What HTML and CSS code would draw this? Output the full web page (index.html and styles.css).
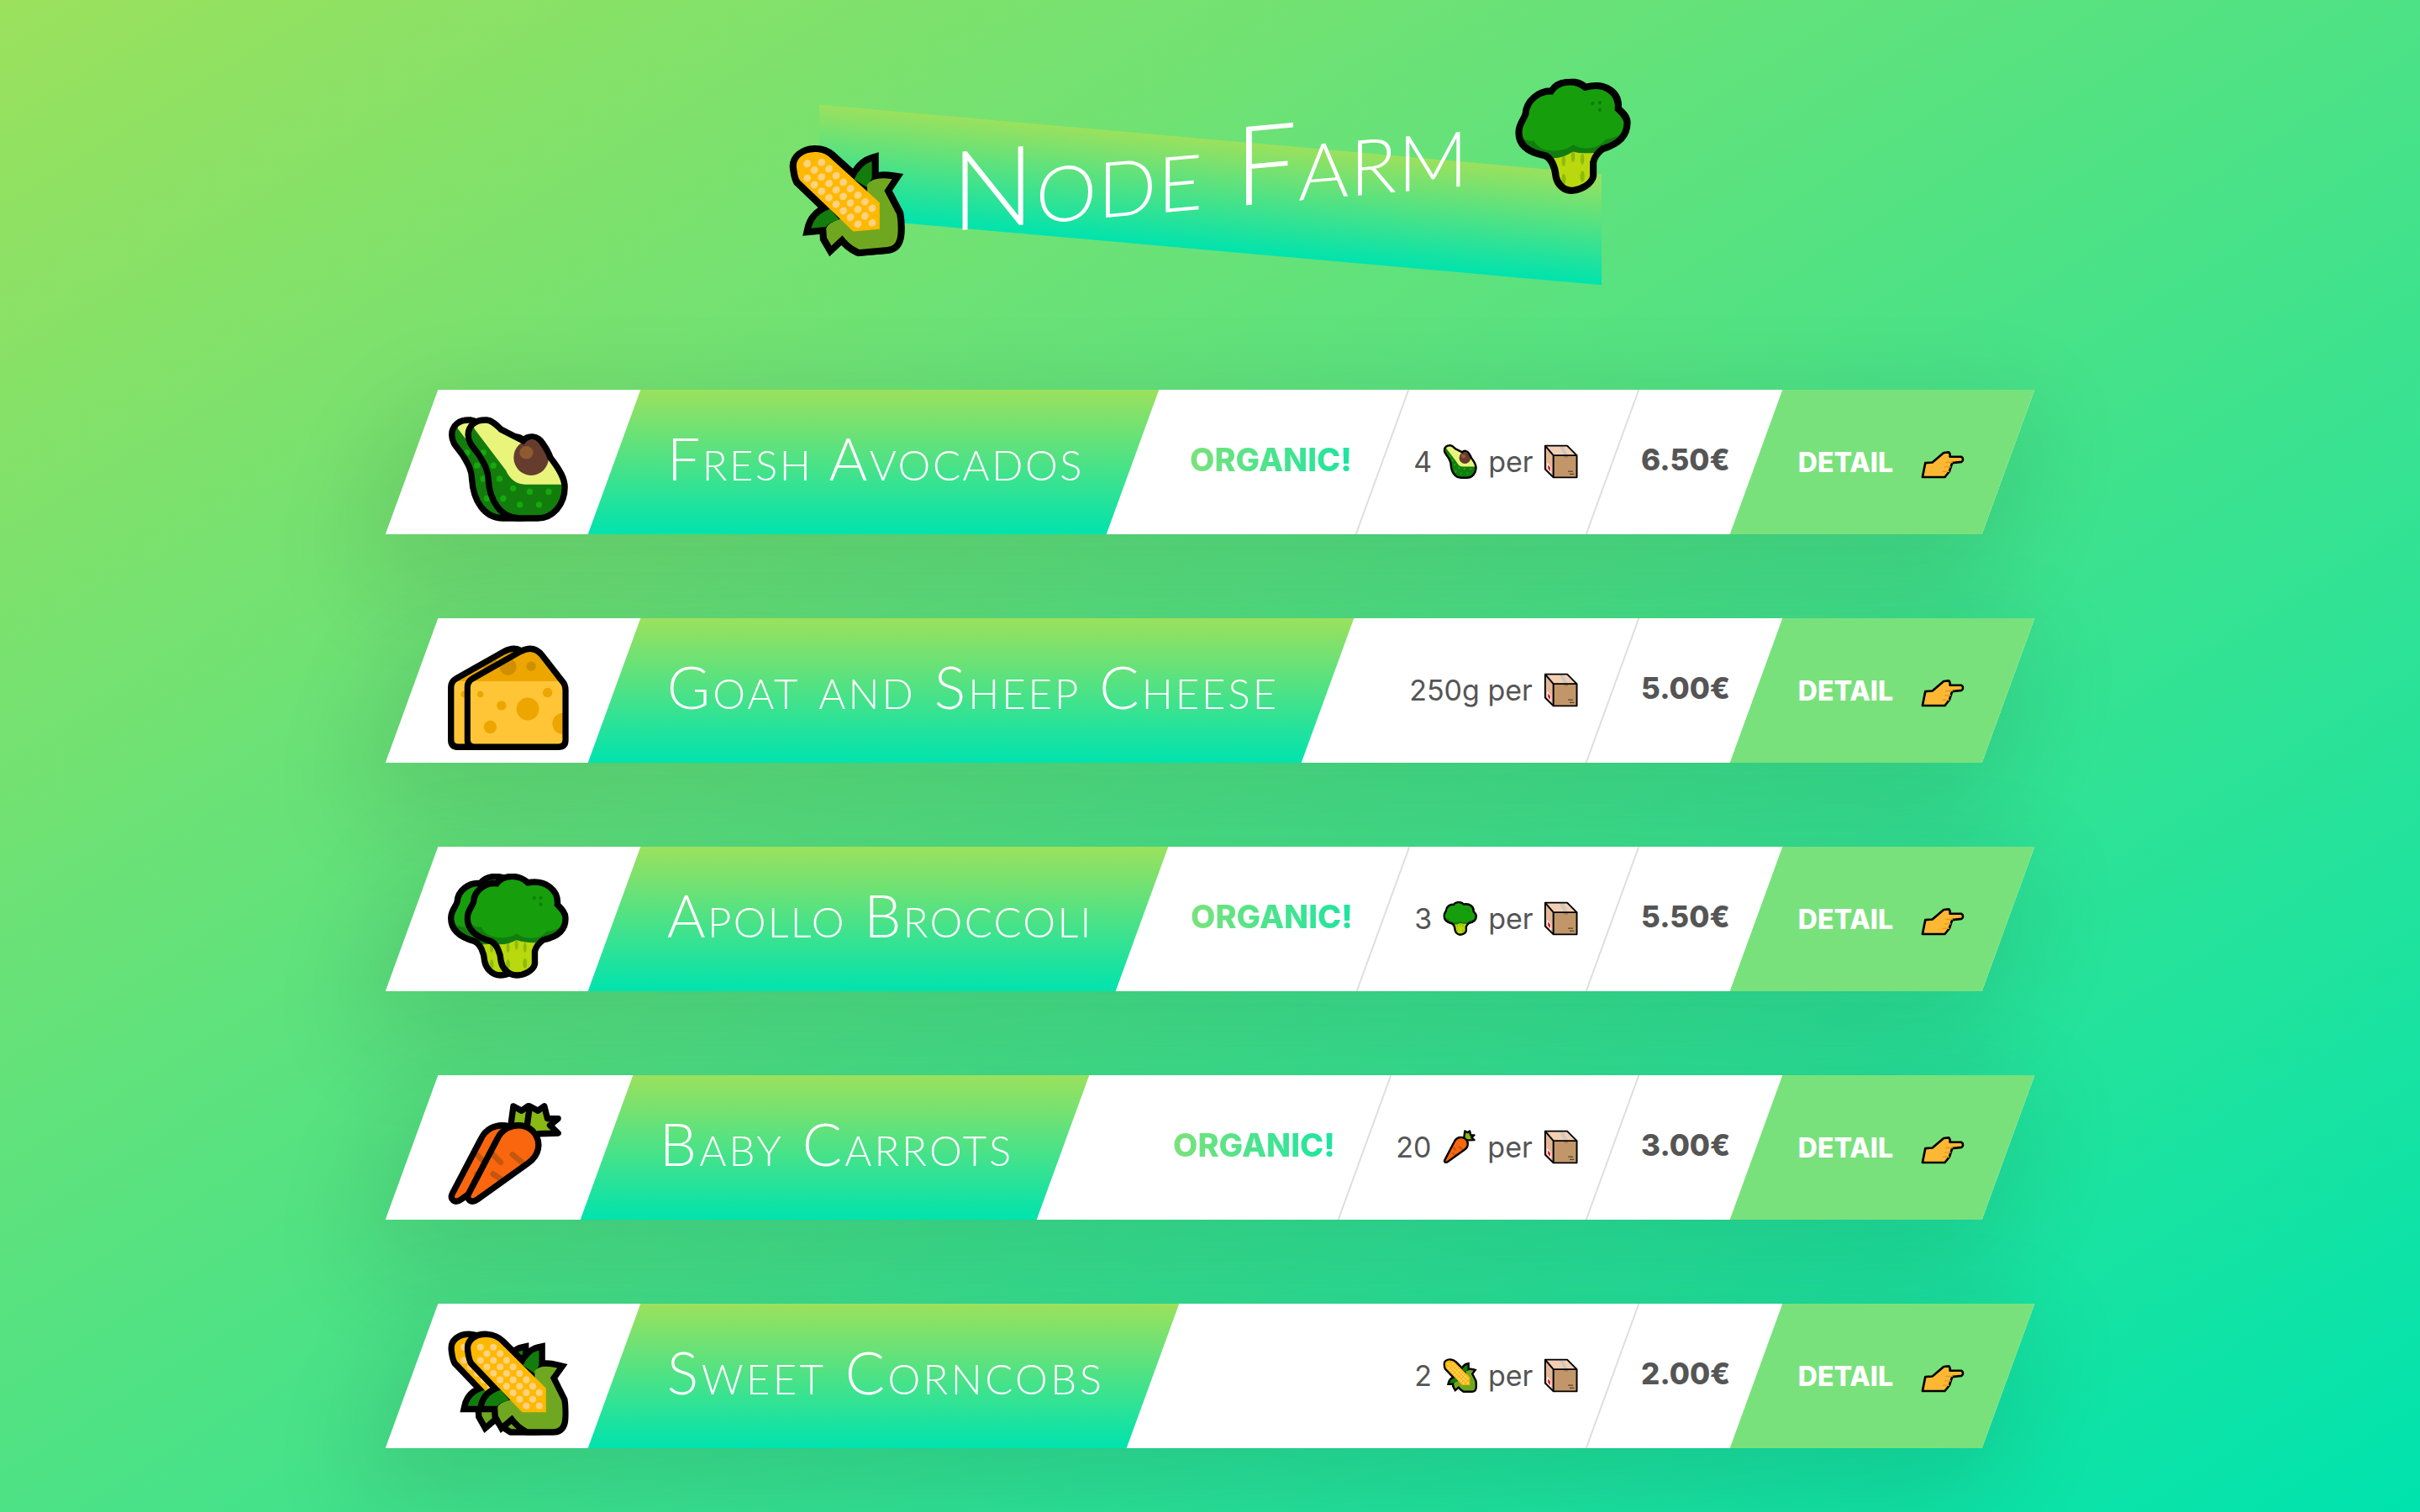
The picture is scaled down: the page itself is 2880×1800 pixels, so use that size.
FILE: index.html
```html
<!DOCTYPE html>
<html>
<head>
  <meta charset='utf-8'>
  <title>Node Farm</title>
  <link rel="stylesheet" href="styles.css">
</head>

<body>
  <svg class="sprite" aria-hidden="true">
    <defs>
      <clipPath id="cheese-clip"><path d="M11 150Q11 128 30 118L200 22Q245 -2 275 35L345 125Q359 140 359 160L359 335Q359 361 333 361L37 361Q11 361 11 335Z"/></clipPath>
      <clipPath id="avocado-clip"><path d="M14 65C14 30 40 10 80 12C100 14 115 30 130 45L208 85C225 65 260 65 278 95C292 115 300 130 305 145C340 190 356 220 356 250C356 310 315 360 260 360L195 360C130 360 90 300 85 220C85 190 70 165 55 140C35 110 14 95 14 65Z"/></clipPath>
      <clipPath id="broccoli-clip"><path d="M11 158C11 130 30 115 33 100C35 60 75 30 115 35C135 5 190 0 225 32C290 20 335 60 330 110C345 125 359 140 359 158C359 200 330 225 280 235C265 245 255 255 250 275L250 320C245 345 210 360 185 360C155 360 135 335 130 310C128 280 115 250 95 240C40 225 11 200 11 158Z"/></clipPath>
      <clipPath id="carrot-clip"><path d="M16 325L118 130C135 95 170 78 205 83C245 90 270 125 263 165C258 190 245 205 225 218L48 345C25 362 5 345 16 325Z"/></clipPath>
    </defs>

    <symbol id="cheese" viewBox="0 0 370 372">
      <path fill="#ffc536" d="M11 150Q11 128 30 118L200 22Q245 -2 275 35L345 125Q359 140 359 160L359 335Q359 361 333 361L37 361Q11 361 11 335Z"/>
      <g clip-path="url(#cheese-clip)">
        <path fill="#eda600" d="M0 128L370 128L370 0L0 0Z"/>
        <circle fill="#cf8f00" cx="155" cy="77" r="30"/>
        <circle fill="#cf8f00" cx="237" cy="75" r="17"/>
        <g fill="#eda600">
          <circle cx="225" cy="226" r="40"/>
          <circle cx="132" cy="214" r="17"/>
          <circle cx="92" cy="290" r="23"/>
          <circle cx="57" cy="174" r="11"/>
          <circle cx="295" cy="168" r="17"/>
          <circle cx="350" cy="278" r="38"/>
        </g>
      </g>
      <path fill="none" stroke="#000" stroke-width="22" d="M11 150Q11 128 30 118L200 22Q245 -2 275 35L345 125Q359 140 359 160L359 335Q359 361 333 361L37 361Q11 361 11 335Z"/>
    </symbol>

    <symbol id="avocado" viewBox="0 0 370 372">
      <path fill="#127d0c" d="M14 65C14 30 40 10 80 12C100 14 115 30 130 45L208 85C225 65 260 65 278 95C292 115 300 130 305 145C340 190 356 220 356 250C356 310 315 360 260 360L195 360C130 360 90 300 85 220C85 190 70 165 55 140C35 110 14 95 14 65Z"/>
      <g clip-path="url(#avocado-clip)">
        <path fill="#e8f57a" d="M20 0L37 45L147 190Q170 240 215 240L370 240L370 0Z"/>
        <g fill="#16a80e">
          <circle cx="68" cy="127" r="11"/>
          <circle cx="103" cy="173" r="11"/>
          <circle cx="125" cy="220" r="11"/>
          <circle cx="173" cy="254" r="11"/>
          <circle cx="232" cy="266" r="11"/>
          <circle cx="299" cy="266" r="11"/>
          <circle cx="138" cy="290" r="11"/>
          <circle cx="197" cy="312" r="11"/>
          <circle cx="265" cy="312" r="11"/>
        </g>
      </g>
      <ellipse fill="#653c2e" cx="237" cy="145" rx="62" ry="63"/>
      <ellipse fill="#8d5b2f" cx="220" cy="127" rx="24" ry="23"/>
      <path fill="none" stroke="#000" stroke-width="22" d="M14 65C14 30 40 10 80 12C100 14 115 30 130 45L208 85C225 65 260 65 278 95C292 115 300 130 305 145C340 190 356 220 356 250C356 310 315 360 260 360L195 360C130 360 90 300 85 220C85 190 70 165 55 140C35 110 14 95 14 65Z"/>
    </symbol>

    <symbol id="broccoli" viewBox="0 0 370 372">
      <path fill="#b9d80d" d="M11 158C11 130 30 115 33 100C35 60 75 30 115 35C135 5 190 0 225 32C290 20 335 60 330 110C345 125 359 140 359 158C359 200 330 225 280 235C265 245 255 255 250 275L250 320C245 345 210 360 185 360C155 360 135 335 130 310C128 280 115 250 95 240C40 225 11 200 11 158Z"/>
      <g clip-path="url(#broccoli-clip)">
        <g fill="#8cbb0c">
          <ellipse cx="155" cy="262" rx="6" ry="18"/>
          <ellipse cx="185" cy="252" rx="6" ry="18"/>
          <ellipse cx="215" cy="262" rx="6" ry="18"/>
          <ellipse cx="155" cy="322" rx="7" ry="18"/>
          <ellipse cx="215" cy="318" rx="7" ry="18"/>
        </g>
        <path fill="#117d0e" d="M0 0L370 0L370 170C350 215 300 235 260 245Q210 245 185 235Q150 255 115 250C70 230 20 220 0 160Z"/>
        <path fill="#179e0c" d="M0 0L370 0L370 165C345 200 300 205 290 205C270 235 215 235 185 213C160 235 80 235 60 190C30 190 15 170 0 150Z"/>
        <g fill="#117d0e">
          <circle cx="248" cy="86" r="6"/>
          <circle cx="271" cy="86" r="6"/>
          <circle cx="271" cy="109" r="6"/>
        </g>
      </g>
      <path fill="none" stroke="#000" stroke-width="22" d="M11 158C11 130 30 115 33 100C35 60 75 30 115 35C135 5 190 0 225 32C290 20 335 60 330 110C345 125 359 140 359 158C359 200 330 225 280 235C265 245 255 255 250 275L250 320C245 345 210 360 185 360C155 360 135 335 130 310C128 280 115 250 95 240C40 225 11 200 11 158Z"/>
    </symbol>

    <symbol id="carrot" viewBox="0 0 345 372">
      <path fill="#88b914" stroke="#000" stroke-width="22" stroke-linejoin="round" d="M220 110L233 14L262 30L285 14L296 58L334 58L305 82L334 110L265 112L250 125Z"/>
      <path fill="#f9660d" d="M16 325L118 130C135 95 170 78 205 83C245 90 270 125 263 165C258 190 245 205 225 218L48 345C25 362 5 345 16 325Z"/>
      <g clip-path="url(#carrot-clip)" fill="none" stroke="#c5560f" stroke-width="20" stroke-linecap="round">
        <path d="M172 186L205 213"/>
        <path d="M103 255L130 273"/>
        <path d="M105 188L130 213"/>
      </g>
      <path fill="none" stroke="#000" stroke-width="22" d="M16 325L118 130C135 95 170 78 205 83C245 90 270 125 263 165C258 190 245 205 225 218L48 345C25 362 5 345 16 325Z"/>
    </symbol>

    <symbol id="corn" viewBox="0 0 370 373">
      <g stroke="#000" stroke-width="44" stroke-linejoin="miter" stroke-miterlimit="3">
        <path d="M208 123Q230 78 265 70L265 123L250 153Z"/>
        <path d="M70 268Q80 225 130 211L160 248Q125 255 118 268Z"/>
        <path d="M250 143Q270 118 330 133L305 168L345 248C350 275 350 310 346 325Q340 350 315 350L225 350Q195 335 170 300L135 330L120 303L118 273Q125 255 160 248L250 200Z"/>
        <path stroke-linejoin="round" d="M23 70C18 40 45 22 80 24C105 26 118 34 130 46L290 205L290 290L205 290L33 110C27 100 25 85 23 70Z"/>
      </g>
      <path fill="#127d0c" d="M208 123Q230 78 265 70L265 123L250 153Z"/>
      <path fill="#127d0c" d="M70 268Q80 225 130 211L160 248Q125 255 118 268Z"/>
      <path fill="#6fa820" d="M250 143Q270 118 330 133L305 168L345 248C350 275 350 310 346 325Q340 350 315 350L225 350Q195 335 170 300L135 330L120 303L118 273Q125 255 160 248L250 200Z"/>
      <path fill="#ffb800" d="M23 70C18 40 45 22 80 24C105 26 118 34 130 46L290 205L290 290L205 290L33 110C27 100 25 85 23 70Z"/>
      <g fill="#ffd27f">
        <circle cx="57" cy="59" r="12"/><circle cx="103" cy="59" r="12"/><circle cx="80" cy="82" r="12"/><circle cx="127" cy="82" r="12"/>
        <circle cx="57" cy="106" r="12"/><circle cx="103" cy="106" r="12"/><circle cx="150" cy="106" r="12"/><circle cx="80" cy="129" r="12"/>
        <circle cx="127" cy="129" r="12"/><circle cx="173" cy="129" r="12"/><circle cx="103" cy="152" r="12"/><circle cx="150" cy="152" r="12"/>
        <circle cx="196" cy="152" r="12"/><circle cx="127" cy="175" r="12"/><circle cx="173" cy="175" r="12"/><circle cx="220" cy="175" r="12"/>
        <circle cx="150" cy="198" r="12"/><circle cx="196" cy="198" r="12"/><circle cx="243" cy="198" r="12"/><circle cx="173" cy="221" r="12"/>
        <circle cx="220" cy="221" r="12"/><circle cx="266" cy="221" r="12"/><circle cx="196" cy="244" r="12"/><circle cx="243" cy="244" r="12"/>
        <circle cx="220" cy="268" r="12"/><circle cx="266" cy="268" r="12"/>
      </g>
    </symbol>

    <symbol id="box" viewBox="0 0 125 125">
      <path fill="#c19769" d="M35 40L120 40L120 120L35 120Z"/>
      <path fill="#f3cfb3" d="M5 5L85 5L120 40L35 40Z"/>
      <path fill="#e4b897" d="M5 5L35 40L35 120L5 90Z"/>
      <path fill="#cfc8c0" d="M55 5L70 5L88 40L74 40Z"/>
      <path fill="#a5794f" d="M74 40L88 40L88 48L74 48Z"/>
      <path fill="#fff" d="M12 66L27 82L27 106L12 90Z"/>
      <path fill="#e8152a" d="M15 74L24 84L24 98L15 88Z"/>
      <path fill="#5a4632" d="M88 96L106 96L106 100L88 100ZM94 106L110 106L110 110L94 110Z"/>
      <path fill="none" stroke="#000" stroke-width="6" stroke-linejoin="round" d="M5 5L85 5L120 40L120 120L35 120L5 90ZM5 5L35 40L120 40M35 40L35 120"/>
    </symbol>

    <symbol id="hand" viewBox="0 0 152 98">
      <path fill="#fdb833" stroke="#000" stroke-width="8" stroke-linejoin="round" d="M5 92L15 42L40 40L80 6L98 4C103 8 103 14 102 20L142 20C150 24 150 34 143 38L110 42L100 72L84 92Z"/>
      <path fill="none" stroke="#df9a20" stroke-width="4" d="M86 40L112 40M82 56L106 56M76 72L100 72"/>
    </symbol>
  </svg>

  <div class="page">
    <h1 class="title">
      <svg class="title-emoji"><use href="#corn"/></svg>
      <span class="title-text">Node Farm</span>
      <svg class="title-emoji"><use href="#broccoli"/></svg>
    </h1>

    <div class="cards">
      <div class="card">
        <div class="card-emoji"><svg class="big-emoji" viewBox="0 0 428 372"><use href="#avocado" width="370" height="372"/><use href="#avocado" x="58" width="370" height="372"/></svg></div>
        <h2 class="card-name"><span class="unskew name-avocado">Fresh Avocados</span></h2>
        <div class="card-organic"><span class="unskew organic-text">ORGANIC!</span></div>
        <div class="card-qty"><span class="unskew qty">4 <svg class="small-emoji"><use href="#avocado"/></svg> per <svg class="small-emoji"><use href="#box"/></svg></span></div>
        <div class="card-price"><span class="unskew">6.50€</span></div>
        <a class="card-detail" href="#"><span class="unskew detail">DETAIL <svg class="hand"><use href="#hand"/></svg></span></a>
      </div>

      <div class="card">
        <div class="card-emoji"><svg class="big-emoji" viewBox="0 0 428 372"><use href="#cheese" width="370" height="372"/><use href="#cheese" x="58" width="370" height="372"/></svg></div>
        <h2 class="card-name"><span class="unskew name-cheese">Goat and Sheep Cheese</span></h2>
        <div class="card-qty"><span class="unskew qty">250g per <svg class="small-emoji"><use href="#box"/></svg></span></div>
        <div class="card-price"><span class="unskew">5.00€</span></div>
        <a class="card-detail" href="#"><span class="unskew detail">DETAIL <svg class="hand"><use href="#hand"/></svg></span></a>
      </div>

      <div class="card">
        <div class="card-emoji"><svg class="big-emoji" viewBox="0 0 428 372"><use href="#broccoli" width="370" height="372"/><use href="#broccoli" x="58" width="370" height="372"/></svg></div>
        <h2 class="card-name"><span class="unskew name-broccoli">Apollo Broccoli</span></h2>
        <div class="card-organic"><span class="unskew organic-text">ORGANIC!</span></div>
        <div class="card-qty"><span class="unskew qty">3 <svg class="small-emoji"><use href="#broccoli"/></svg> per <svg class="small-emoji"><use href="#box"/></svg></span></div>
        <div class="card-price"><span class="unskew">5.50€</span></div>
        <a class="card-detail" href="#"><span class="unskew detail">DETAIL <svg class="hand"><use href="#hand"/></svg></span></a>
      </div>

      <div class="card">
        <div class="card-emoji"><svg class="big-emoji carrot-emoji" viewBox="0 0 403 372"><use href="#carrot" width="345" height="372"/><use href="#carrot" x="58" width="345" height="372"/></svg></div>
        <h2 class="card-name"><span class="unskew name-carrot">Baby Carrots</span></h2>
        <div class="card-organic"><span class="unskew organic-text">ORGANIC!</span></div>
        <div class="card-qty"><span class="unskew qty">20 <svg class="small-emoji"><use href="#carrot"/></svg> per <svg class="small-emoji"><use href="#box"/></svg></span></div>
        <div class="card-price"><span class="unskew">3.00€</span></div>
        <a class="card-detail" href="#"><span class="unskew detail">DETAIL <svg class="hand"><use href="#hand"/></svg></span></a>
      </div>

      <div class="card">
        <div class="card-emoji"><svg class="big-emoji" viewBox="0 0 428 373"><use href="#corn" width="370" height="373"/><use href="#corn" x="58" width="370" height="373"/></svg></div>
        <h2 class="card-name"><span class="unskew name-corn">Sweet Corncobs</span></h2>
        <div class="card-qty"><span class="unskew qty">2 <svg class="small-emoji"><use href="#corn"/></svg> per <svg class="small-emoji"><use href="#box"/></svg></span></div>
        <div class="card-price"><span class="unskew">2.00€</span></div>
        <a class="card-detail" href="#"><span class="unskew detail">DETAIL <svg class="hand"><use href="#hand"/></svg></span></a>
      </div>
    </div>
  </div>
</body>
</html>
```

FILE: styles.css
```css
* {
  box-sizing: border-box;
}

html, body {
  margin: 0;
  min-height: 100%;
}

body {
  height: 1800px;
  overflow: hidden;
  background-image: linear-gradient(to bottom right, #9be15d, #00e3ae);
  color: #555;
  font-family: Inter, sans-serif;
  font-size: 34px;
}

.sprite {
  display: block;
  width: 0;
  height: 0;
}

.page {
  padding: 128px 490px 0;
}

.title {
  position: relative;
  height: 144px;
  margin: 0 0 192px;
  display: flex;
  justify-content: center;
  align-items: center;
  gap: 55px;
  transform: skewY(-5deg);
  color: #fff;
  font-family: Lato, sans-serif;
  font-size: 132px;
  font-weight: 300;
  font-variant: small-caps;
}

/* band runs the other way, so it has to undo the title's skew first */
.title::before {
  content: "";
  position: absolute;
  left: 485px;
  top: 38px;
  width: 931px;
  height: 132px;
  transform: skewY(10deg);
  background-image: linear-gradient(to bottom, #9be15d, #00e3ae);
}

.title-text {
  position: relative;
  top: -3px;
  letter-spacing: 1.2px;
  line-height: 1;
}

.title-emoji {
  position: relative;
  width: 138px;
  height: 138px;
  flex: none;
}

.card {
  height: 172px;
  margin-bottom: 100px;
  display: flex;
  align-items: stretch;
  background: #fff;
  transform: skewX(-20deg);
  box-shadow: 0 40px 120px 20px rgba(0, 0, 0, .11);
}

.unskew {
  display: inline-block;
  transform: skewX(20deg);
}

.card > * {
  display: flex;
  align-items: center;
}

.card-emoji {
  padding: 16px 51px 0 46px;
}

.big-emoji {
  width: 144px;
  height: 125px;
  transform: skewX(20deg);
}

.carrot-emoji {
  width: 135px;
}

.card-name {
  margin: 0 auto 0 0;
  padding: 0 60px 10px 61px;
  background-image: linear-gradient(to bottom, #9be15d, #00e3ae);
  color: #fff;
  font-family: Lato, sans-serif;
  font-size: 70px;
  font-weight: 300;
  font-variant: small-caps;
  line-height: 1;
  white-space: nowrap;
}

.name-avocado { letter-spacing: 2.5px; }
.name-cheese { letter-spacing: 3px; }
.name-broccoli { letter-spacing: 2.3px; }
.name-carrot { letter-spacing: 3.1px; }
.name-corn { letter-spacing: 3.4px; }

.card-organic {
  padding: 0 36px 6px;
  font-size: 38px;
  font-weight: 800;
}

.organic-text {
  background-image: linear-gradient(to right, #7be27a, #1be5a0);
  -webkit-background-clip: text;
  background-clip: text;
  color: transparent;
}

.card-organic + .card-qty {
  border-left: 2px solid #ddd;
}

.card-qty {
  padding: 0 40px 2px 36px;
}

.qty {
  display: inline-flex;
  align-items: center;
  gap: 13px;
  white-space: nowrap;
}

.small-emoji {
  width: 41px;
  height: 41px;
}

.card-price {
  width: 172px;
  justify-content: center;
  padding-bottom: 6px;
  border-left: 2px solid #ddd;
  font-size: 35px;
  font-weight: 800;
}

.card-detail {
  width: 300px;
  padding-left: 50px;
  background: #79e17b;
  color: #fff;
  font-size: 32px;
  font-weight: 800;
  text-decoration: none;
}

.detail {
  display: inline-flex;
  align-items: center;
  gap: 33px;
}

.hand {
  width: 52px;
  height: 33px;
  margin-top: 6px;
}
```
